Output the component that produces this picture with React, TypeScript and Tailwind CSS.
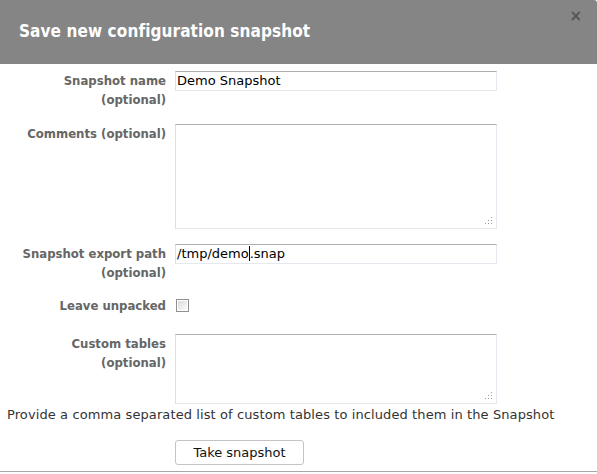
import React from "react";

const labelFont = { fontFamily: '"DejaVu Sans Condensed", "DejaVu Sans", sans-serif' };
const bodyFont = { fontFamily: '"DejaVu Sans", Verdana, sans-serif' };

function Grip() {
  return (
    <svg width="8" height="8" viewBox="0 0 8 8" className="absolute right-[3px] bottom-[3px]">
      <g fill="#9a9a9a">
        <rect x="6" y="0" width="1" height="1" />
        <rect x="3" y="3" width="1" height="1" />
        <rect x="6" y="3" width="1" height="1" />
        <rect x="0" y="6" width="1" height="1" />
        <rect x="3" y="6" width="1" height="1" />
        <rect x="6" y="6" width="1" height="1" />
      </g>
    </svg>
  );
}

function TextBox({ children }: { children?: React.ReactNode }) {
  return (
    <div
      className="w-[322px] h-[20px] border border-[#e3e9ef] border-t-[#abadb3] border-l-[#dbdfe6] bg-white text-[13px] leading-[18px] text-black pl-[1px] whitespace-nowrap"
      style={bodyFont}
    >
      {children}
    </div>
  );
}

function Area({ h }: { h: string }) {
  return (
    <div
      className={`relative w-[322px] ${h} border border-[#e3e9ef] border-t-[#abadb3] border-l-[#dbdfe6] bg-white`}
    >
      <Grip />
    </div>
  );
}

function Label({ children }: { children: React.ReactNode }) {
  return (
    <div
      className="w-[166px] shrink-0 text-right font-bold text-[13px] leading-[19px] text-[#666]"
      style={labelFont}
    >
      {children}
    </div>
  );
}

export default function App() {
  return (
    <div className="w-[597px] h-[474px] bg-white overflow-hidden">
      <div className="relative w-[597px] h-[472px] border-b border-[#a8a8a8]">
        <div className="h-[64px] bg-[#858585] rounded-tr-[3px] flex items-center pl-[19px]">
          <div
            className="text-white font-bold text-[17px] tracking-[0.1px]"
            style={labelFont}
          >
            Save new configuration snapshot
          </div>
          <div
            className="absolute right-[15px] top-[8px] text-[#555] font-bold text-[15px] leading-[16px]"
            style={{ fontFamily: '"DejaVu Sans", sans-serif' }}
          >
            ×
          </div>
        </div>

        <div className="flex gap-[9px] mt-[7px]">
          <Label>
            Snapshot name
            <br />
            (optional)
          </Label>
          <TextBox>Demo Snapshot</TextBox>
        </div>

        <div className="flex gap-[9px] mt-[15px]">
          <Label>Comments (optional)</Label>
          <Area h="h-[105px]" />
        </div>

        <div className="flex gap-[9px] mt-[15px]">
          <Label>
            Snapshot export path
            <br />
            (optional)
          </Label>
          <TextBox>
            /tmp/demo
            <span className="inline-block w-px h-[15px] bg-black align-[-3px]" />
            .snap
          </TextBox>
        </div>

        <div className="flex gap-[9px] mt-[14px] items-center">
          <Label>Leave unpacked</Label>
          <div className="ml-[1px] w-[13px] h-[13px] border border-[#8f8f8f] p-px bg-white">
            <div className="w-full h-full bg-gradient-to-br from-[#dcdcdc] to-[#fbfbfb]" />
          </div>
        </div>

        <div className="flex gap-[9px] mt-[19px]">
          <Label>
            Custom tables
            <br />
            (optional)
          </Label>
          <Area h="h-[70px]" />
        </div>

        <div
          className="pl-[7px] mt-[2px] text-[13px] leading-[18px] tracking-[0.1px] text-[#333] whitespace-nowrap"
          style={bodyFont}
        >
          Provide a comma separated list of custom tables to included them in the Snapshot
        </div>

        <div className="pl-[175px] mt-[16px]">
          <div
            className="w-[129px] h-[25px] border border-[#c4c4c4] rounded-[3px] bg-white flex items-center justify-center text-[13px] text-[#111]"
            style={bodyFont}
          >
            Take snapshot
          </div>
        </div>
      </div>
    </div>
  );
}
